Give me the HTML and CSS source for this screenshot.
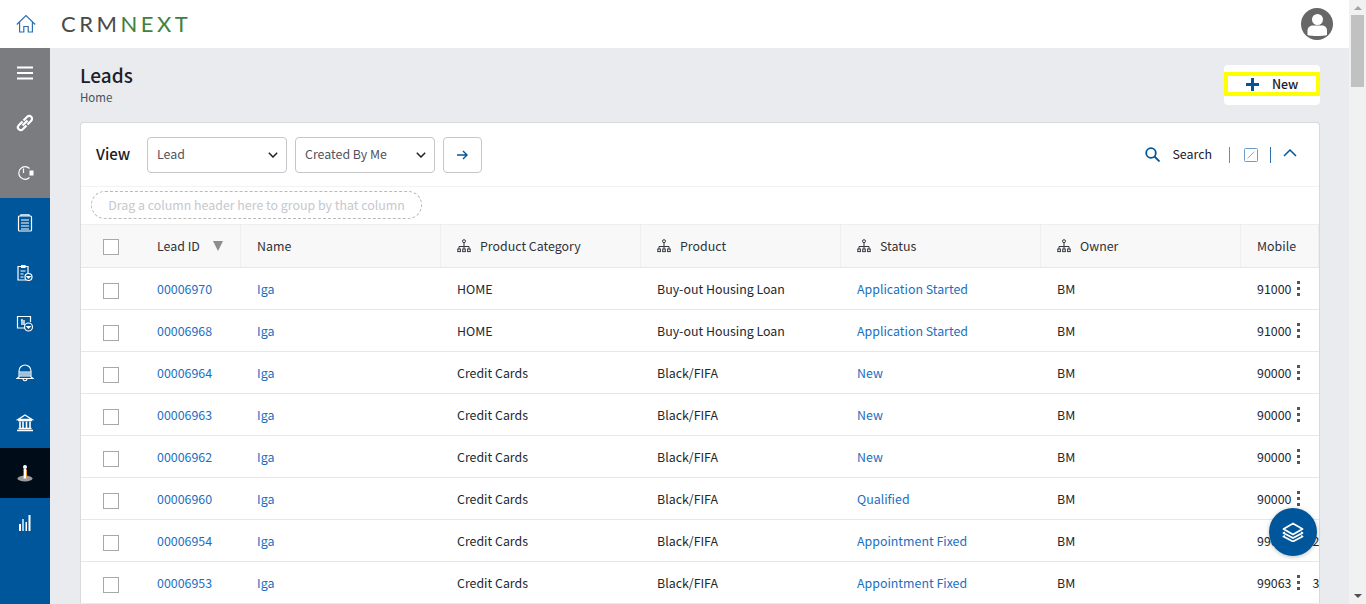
FILE: index.html
```html
<!DOCTYPE html>
<html lang="en">
<head>
<meta charset="utf-8">
<title>Leads</title>
<link rel="stylesheet" href="styles.css">
</head>
<body>
<svg class="defs" width="0" height="0" aria-hidden="true">
  <symbol id="hier" viewBox="0 0 14 14"><g fill="none" stroke="#33373d" stroke-width="1"><circle cx="7" cy="2.2" r="1.5"/><path d="M7 4v3M2 10V7.5h10V10M7 7v3"/><rect x=".8" y="10" width="2.6" height="2.6"/><rect x="5.7" y="10" width="2.6" height="2.6"/><rect x="10.6" y="10" width="2.6" height="2.6"/></g></symbol>
</svg>
<div class="page">
  <div class="app">
    <header class="topbar">
      <svg class="home" width="20" height="20" viewBox="0 0 20 20" fill="none" stroke="#2f6fb0" stroke-width="1.2"><path d="M.8 10.500 10 1.500l9.200 9M3.600 8v10h4.200v-5.500h4.400V18h4.200V8"/></svg>
      <div class="logo"><span class="logo-a">CRM</span><span class="logo-b">NEXT</span></div>
      <svg class="avatar" width="32" height="32" viewBox="0 0 32 32"><circle cx="16" cy="16" r="16" fill="#676767"/><circle cx="16.500" cy="11.500" r="5.500" fill="#fff"/><path d="M6.500 27v-4.500c0-3.500 3-5 5.500-5h9c2.500 0 5 1.500 5 5V27c-2.500 1.300-17 1.300-19.500 0z" fill="#fff"/></svg>
    </header>
    <div class="body">
      <nav class="sidebar">
        <div class="nav-group grey">
          <div class="nav-item"><svg width="18" height="18" viewBox="0 0 18 18" fill="none" stroke="#fff"><path d="M1 3.500h16M1 9h16M1 14.500h16" stroke-width="2.200"/></svg></div>
          <div class="nav-item"><svg width="18" height="18" viewBox="0 0 18 18" fill="none" stroke="#fff" stroke-width="2.200"><path d="M6.500 11.500 11.500 6.500M6.500 7.500 2.800 11.200a2.800 2.800 0 0 0 4 4L10.500 11.500M7.500 6.500 11.200 2.800a2.800 2.800 0 0 1 4 4L11.500 10.500"/></svg></div>
          <div class="nav-item"><svg width="18" height="18" viewBox="0 0 18 18" fill="none" stroke="#fff" stroke-width="1.200"><path d="M13.500 13.500A6.300 6.300 0 1 1 13.500 4.500M7.500 4.500v4.500"/><rect x="13.500" y="6.500" width="4" height="5" fill="#fff" stroke="none"/></svg></div>
        </div>
        <div class="nav-group blue">
          <div class="nav-item"><svg width="16" height="18" viewBox="0 0 16 18" fill="none" stroke="#fff" stroke-width="1.200"><rect x="1.500" y="2" width="13" height="15" rx="1"/><path d="M4 2V.8h8V2M4 6h8M4 9h8M4 12h8M4 15h8"/></svg></div>
          <div class="nav-item"><svg width="18" height="18" viewBox="0 0 18 18" fill="none" stroke="#fff" stroke-width="1.200"><path d="M10 16H2V2.500h10V9M5 1.500h4V3.500H5M4.500 7h5M4.500 10h3M4.500 13h3"/><circle cx="12.500" cy="13" r="3.500"/><path d="M11 12.500h3l-1.500 1.700z" fill="#fff"/></svg></div>
          <div class="nav-item"><svg width="18" height="18" viewBox="0 0 18 18" fill="none" stroke="#fff" stroke-width="1.200"><path d="M9 14H1.500V2.500h13V8"/><path d="M5 6.500 6 6v5M8 6v5" stroke-width="1.400"/><circle cx="12.500" cy="13" r="4"/><path d="M11 12.500h3l-1.500 1.700z" fill="#fff"/></svg></div>
          <div class="nav-item"><svg width="18" height="18" viewBox="0 0 18 18" fill="none" stroke="#fff" stroke-width="1.100"><path d="M3.500 8.500h11v3h-11z" fill="#9fc0dc" stroke="none"/><path d="M3 13V7a6 6 0 0 1 12 0v6l2 1.500H1zM3 8h12M3 12h12M7 14.500c0 3 4 3 4 0"/></svg></div>
          <div class="nav-item"><svg width="18" height="18" viewBox="0 0 18 18" fill="none" stroke="#fff"><path d="M9 1 16 5.500H2zM2 6.500h14M2.500 14.500h13M1 16.500h16" stroke-width="1.400"/><path d="M4 7.500v6.500M7 7.500v6.500M10.500 7.500v6.500M14 7.500v6.500" stroke-width="1.600"/></svg></div>
          <div class="nav-item active"><svg width="18" height="18" viewBox="0 0 18 18"><ellipse cx="9" cy="14.500" rx="7.500" ry="3" fill="#9a9a9a"/><circle cx="9" cy="3" r="2" fill="#fff"/><rect x="7.600" y="5" width="2.800" height="9.500" fill="#fff"/><rect x="10" y="6" width="1" height="8" fill="#f0a020"/></svg></div>
          <div class="nav-item"><svg width="12" height="18" viewBox="0 0 12 18" fill="#fff"><rect x="0" y="10" width="2" height="7"/><rect x="3" y="5" width="2" height="12" fill="#9fd0ee"/><rect x="6.500" y="8" width="1.500" height="9"/><rect x="9.500" y="1" width="2" height="16"/></svg></div>
        </div>
      </nav>
      <main class="content">
        <div class="title-row">
          <div>
            <h1 class="title">Leads</h1>
            <div class="crumb">Home</div>
          </div>
          <div class="new-wrap">
            <button class="new-btn" type="button">
              <svg width="13" height="13" viewBox="0 0 13 13"><path d="M6.500 0v13M0 6.500h13" stroke="#00569a" stroke-width="3"/></svg>
              <span>New</span>
            </button>
          </div>
        </div>
        <section class="card">
          <div class="toolbar">
            <span class="view-label">View</span>
            <div class="select"><span class="select-text">Lead</span><svg width="10" height="6" viewBox="0 0 10 6" fill="none" stroke="#222" stroke-width="1.500"><path d="M.8.8 5 5 9.200.8"/></svg></div>
            <div class="select"><span class="select-text">Created By Me</span><svg width="10" height="6" viewBox="0 0 10 6" fill="none" stroke="#222" stroke-width="1.500"><path d="M.8.8 5 5 9.200.8"/></svg></div>
            <button class="go" type="button"><svg width="11" height="10" viewBox="0 0 11 10" fill="none" stroke="#00569a" stroke-width="1.400"><path d="M0 5h10M6 1l4 4-4 4"/></svg></button>
            <div class="tools">
              <svg class="tool-search" width="15" height="15" viewBox="0 0 15 15" fill="none" stroke="#00569a" stroke-width="1.800"><circle cx="6" cy="6" r="4.800"/><path d="m9.500 9.500 5 5"/></svg>
              <span class="search-label">Search</span>
              <span class="sep sep-a"></span>
              <svg class="tool-exp" width="14" height="14" viewBox="0 0 14 14" fill="none" stroke="#6f9bcb" stroke-width="1"><rect x=".5" y=".5" width="13" height="13" rx="1"/><path d="M3.500 10.500 10.500 3.500" stroke-width=".8"/></svg>
              <span class="sep sep-b"></span>
              <svg class="tool-up" width="14" height="8" viewBox="0 0 14 8" fill="none" stroke="#00569a" stroke-width="1.500"><path d="M1 7 7 1l6 6"/></svg>
            </div>
          </div>
          <div class="group-row"><div class="group-drop">Drag a column header here to group by that column</div></div>
          <div class="table">
            <div class="row head">
              <div class="cell c-check"><span class="check"></span></div>
              <div class="cell c-id hd">Lead ID<span class="sort"></span></div>
              <div class="cell c-wide hd">Name</div>
              <div class="cell c-wide hd"><svg class="hier" width="14" height="14"><use href="#hier"/></svg>Product Category</div>
              <div class="cell c-wide hd"><svg class="hier" width="14" height="14"><use href="#hier"/></svg>Product</div>
              <div class="cell c-wide hd"><svg class="hier" width="14" height="14"><use href="#hier"/></svg>Status</div>
              <div class="cell c-wide hd"><svg class="hier" width="14" height="14"><use href="#hier"/></svg>Owner</div>
              <div class="cell c-mobile hd">Mobile</div>
            </div>
            <div class="row"><div class="cell c-check"><span class="check"></span></div><div class="cell c-id link">00006970</div><div class="cell c-wide link">Iga</div><div class="cell c-wide">HOME</div><div class="cell c-wide">Buy-out Housing Loan</div><div class="cell c-wide link">Application Started</div><div class="cell c-wide">BM</div><div class="cell c-mobile"><span>91000</span><span class="kebab"></span></div></div>
            <div class="row"><div class="cell c-check"><span class="check"></span></div><div class="cell c-id link">00006968</div><div class="cell c-wide link">Iga</div><div class="cell c-wide">HOME</div><div class="cell c-wide">Buy-out Housing Loan</div><div class="cell c-wide link">Application Started</div><div class="cell c-wide">BM</div><div class="cell c-mobile"><span>91000</span><span class="kebab"></span></div></div>
            <div class="row"><div class="cell c-check"><span class="check"></span></div><div class="cell c-id link">00006964</div><div class="cell c-wide link">Iga</div><div class="cell c-wide">Credit Cards</div><div class="cell c-wide">Black/FIFA</div><div class="cell c-wide link">New</div><div class="cell c-wide">BM</div><div class="cell c-mobile"><span>90000</span><span class="kebab"></span></div></div>
            <div class="row"><div class="cell c-check"><span class="check"></span></div><div class="cell c-id link">00006963</div><div class="cell c-wide link">Iga</div><div class="cell c-wide">Credit Cards</div><div class="cell c-wide">Black/FIFA</div><div class="cell c-wide link">New</div><div class="cell c-wide">BM</div><div class="cell c-mobile"><span>90000</span><span class="kebab"></span></div></div>
            <div class="row"><div class="cell c-check"><span class="check"></span></div><div class="cell c-id link">00006962</div><div class="cell c-wide link">Iga</div><div class="cell c-wide">Credit Cards</div><div class="cell c-wide">Black/FIFA</div><div class="cell c-wide link">New</div><div class="cell c-wide">BM</div><div class="cell c-mobile"><span>90000</span><span class="kebab"></span></div></div>
            <div class="row"><div class="cell c-check"><span class="check"></span></div><div class="cell c-id link">00006960</div><div class="cell c-wide link">Iga</div><div class="cell c-wide">Credit Cards</div><div class="cell c-wide">Black/FIFA</div><div class="cell c-wide link">Qualified</div><div class="cell c-wide">BM</div><div class="cell c-mobile"><span>90000</span><span class="kebab"></span></div></div>
            <div class="row"><div class="cell c-check"><span class="check"></span></div><div class="cell c-id link">00006954</div><div class="cell c-wide link">Iga</div><div class="cell c-wide">Credit Cards</div><div class="cell c-wide">Black/FIFA</div><div class="cell c-wide link">Appointment Fixed</div><div class="cell c-wide">BM</div><div class="cell c-mobile"><span>99063</span><span class="kebab"></span><span class="extra">2</span></div></div>
            <div class="row"><div class="cell c-check"><span class="check"></span></div><div class="cell c-id link">00006953</div><div class="cell c-wide link">Iga</div><div class="cell c-wide">Credit Cards</div><div class="cell c-wide">Black/FIFA</div><div class="cell c-wide link">Appointment Fixed</div><div class="cell c-wide">BM</div><div class="cell c-mobile"><span>99063</span><span class="kebab"></span><span class="extra">3</span></div></div>
          </div>
        </section>
      </main>
    </div>
    <button class="fab" type="button" aria-label="Layers">
      <svg width="22" height="20" viewBox="0 0 22 20" fill="none" stroke="#fff" stroke-width="1.800" stroke-linejoin="round"><path d="M11 1.500 20.500 7 11 12.500 1.500 7z"/><path d="M3 10.300 1.500 11 11 16 20.500 11 19 10.300"/><path d="M3 13.800 1.500 14.500 11 19.500 20.500 14.500 19 13.800"/></svg>
    </button>
  </div>
  <div class="scrollbar">
    <span class="arrow arrow-up"></span>
    <span class="thumb"></span>
    <span class="arrow arrow-down"></span>
  </div>
</div>
</body>
</html>
```
FILE: styles.css
```css
* { box-sizing: border-box; }
html, body { margin: 0; height: 100%; overflow: hidden; }
body {
  font-family: "Noto Sans CJK SC", "Noto Sans", sans-serif;
  font-size: 12.4px;
  color: #24282e;
  background: #e9ebef;
}
.defs { position: absolute; }
.page { display: flex; width: 1366px; height: 604px; }
.app { position: relative; width: 1349px; height: 604px; display: flex; flex-direction: column; overflow: hidden; }

.topbar { flex: none; height: 48px; background: #fff; display: flex; align-items: center; padding: 0 16px; }
.home { flex: none; }
.logo { margin-left: 25px; font-family: "Lato", sans-serif; font-size: 22px; font-weight: 400; letter-spacing: 3.500px; line-height: 1; white-space: nowrap; }
.logo-a { color: #4a4a4a; }
.logo-b { color: #3f8240; }
.avatar { margin-left: auto; }

.body { flex: 1; display: flex; min-height: 0; }
.sidebar { flex: none; width: 50px; display: flex; flex-direction: column; background: #00569a; }
.nav-group.grey { background: #7b7c80; }
.nav-group.blue { background: #00569a; flex: 1; }
.nav-item { height: 50px; display: flex; align-items: center; justify-content: center; }
.nav-item.active { background: #000c17; }

.content { flex: 1; min-width: 0; padding: 0 29px 0 30px; }
.title-row { display: flex; justify-content: space-between; height: 74px; padding-top: 15px; }
.title { margin: 0; font-size: 19px; font-weight: 500; line-height: 24px; color: #1c2026; }
.crumb { margin-top: 1px; font-size: 11.500px; line-height: 18px; color: #4a4f57; }
.new-wrap { width: 96px; height: 40px; margin-top: 2px; background: #fff; border-radius: 4px; display: flex; align-items: center; }
.new-btn { width: 96px; height: 24px; margin-top: -2px; padding: 0 0 0 18px; border: 4px solid #ffff00; background: #fff; display: flex; align-items: center; gap: 13px; font: 500 12.4px "Noto Sans CJK SC", sans-serif; color: #1c2026; }

.card { background: #fff; border: 1px solid #d8d9dc; border-bottom: 0; border-radius: 4px 4px 0 0; }
.toolbar { height: 64px; padding: 0 22px 0 15px; display: flex; align-items: center; gap: 8px; border-bottom: 1px solid #f2f2f3; }
.view-label { font-size: 15px; font-weight: 500; width: 43px; margin-top: -2px; color: #1c2026; }
.select { width: 140px; height: 36px; border: 1px solid #c4c6ca; border-radius: 4px; display: flex; align-items: center; justify-content: space-between; padding: 0 8px 0 9px; color: #4f545c; }
.select-text { margin-top: -2px; }
.go { width: 39px; height: 36px; border: 1px solid #c4c6ca; border-radius: 4px; background: #fff; display: flex; align-items: center; justify-content: center; padding: 0; }
.tools { margin-left: auto; display: flex; align-items: center; }
.tool-search { margin-right: 12px; }
.search-label { margin-top: -2px; margin-right: 17px; color: #1c2026; }
.sep { width: 1px; height: 16px; }
.sep-a { background: #c0763a; margin-right: 14px; }
.sep-b { background: #2f6fb0; margin: 0 12px; }
.tool-up { margin-top: -3px; }

.group-row { height: 37px; padding: 4px 10px 0; }
.group-drop { width: 331px; height: 28px; border: 1px dashed #b9b9b9; border-radius: 14px; text-align: center; line-height: 26px; color: #c6c8cb; }

.table { width: 1238px; overflow: hidden; }
.row { display: flex; height: 42px; border-top: 1px solid #e7e7e8; align-items: stretch; }
.row.head { height: 44px; background: #f8f8f8; border-top: 1px solid #eeeeef; border-bottom: 1px solid #e7e7e8; }
.head + .row { height: 41px; border-top: 0; }
.cell { flex: none; display: flex; align-items: center; padding-left: 16px; white-space: nowrap; overflow: hidden; }
.c-check { width: 60px; padding-left: 22px; }
.c-id { width: 100px; }
.c-wide { width: 200px; }
.c-mobile { width: 78px; }
.hd { border-right: 1px solid #efefef; color: #2e3238; }
.check { width: 16px; height: 16px; margin-top: 4px; border: 1px solid #a8a8a8; background: #fff; display: block; }
.head .check { margin-top: 1px; }
.link { color: #1b6fc2; }
.sort { width: 0; height: 0; margin: -1px 0 0 13px; border-left: 5.500px solid transparent; border-right: 5.500px solid transparent; border-top: 10px solid #8d8d8d; }
.hier { margin-right: 9px; flex: none; }
.kebab { flex: none; width: 3px; height: 15px; margin-left: 6px; background: radial-gradient(circle at 1.500px 1.500px, #555 1.500px, transparent 1.600px) 0 0 / 3px 6px repeat-y; }
.extra { margin-left: 12px; flex: none; }

.fab { position: absolute; left: 1269px; top: 508px; width: 48px; height: 48px; border-radius: 50%; border: 0; padding: 0; background: #00569a; display: flex; align-items: center; justify-content: center; box-shadow: 0 1px 4px rgba(0,0,0,.25); }

.scrollbar { flex: none; width: 17px; height: 604px; background: #f1f1f1; display: flex; flex-direction: column; align-items: center; }
.thumb { width: 13px; height: 72px; background: #c1c1c1; }
.arrow { width: 0; height: 0; border-left: 4px solid transparent; border-right: 4px solid transparent; }
.arrow-up { margin: 6px 0 5px; border-bottom: 4px solid #a3a3a3; }
.arrow-down { margin-top: auto; margin-bottom: 6px; border-top: 4px solid #505050; }
```
